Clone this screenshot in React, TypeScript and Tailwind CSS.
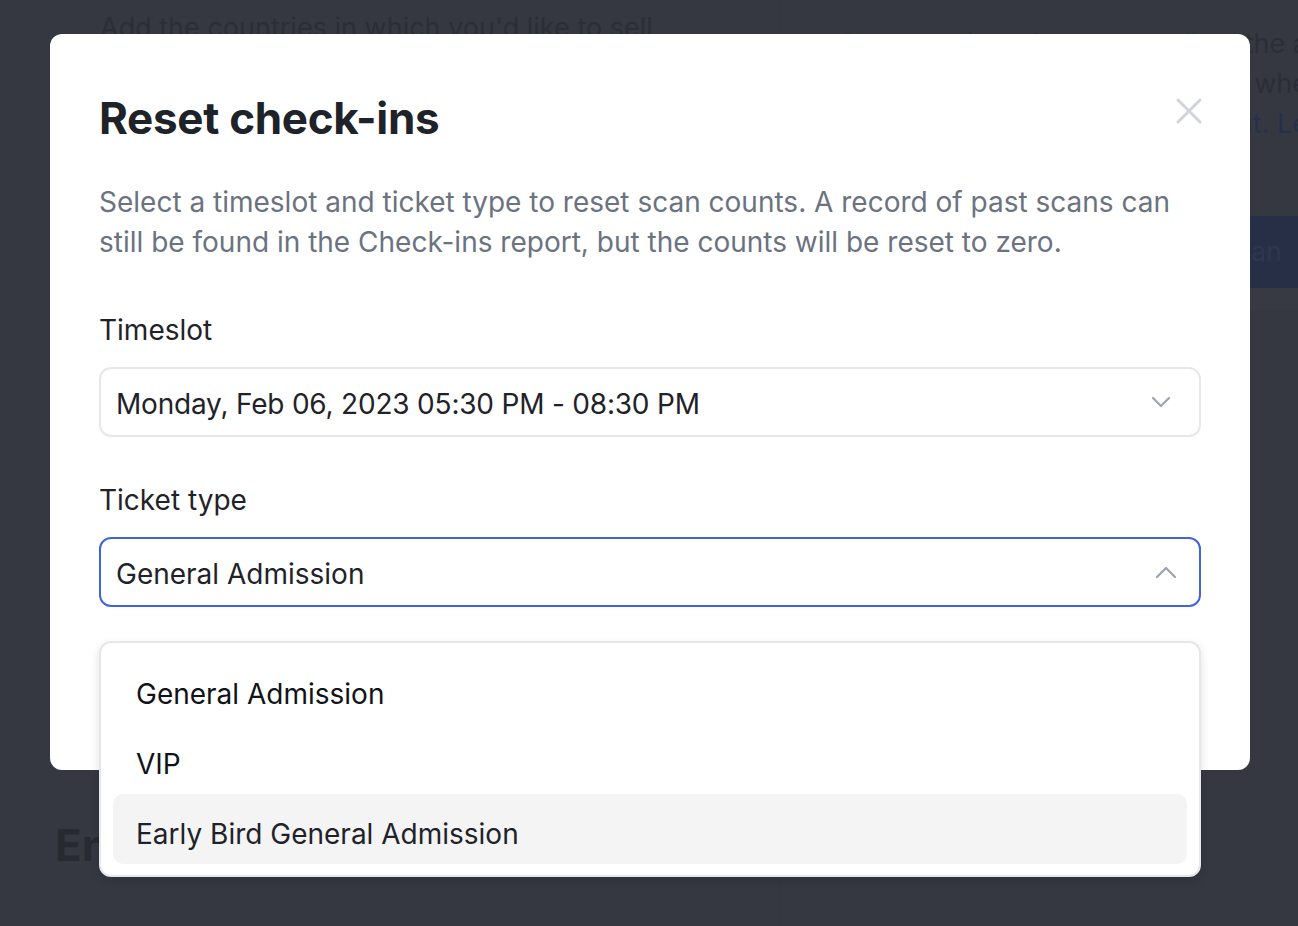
import React from "react";

const font = { fontFamily: "Inter, 'Noto Sans', sans-serif" };

function ChevronDown() {
  return (
    <svg width="20" height="12" viewBox="0 0 20 12" fill="none">
      <path d="M2 2l8 8 8-8" stroke="#9ca3af" strokeWidth="2.2" strokeLinecap="round" strokeLinejoin="round" />
    </svg>
  );
}

function ChevronUp() {
  return (
    <svg width="22" height="14" viewBox="0 0 22 14" fill="none">
      <path d="M2 12l9-9 9 9" stroke="#9ca3af" strokeWidth="2.2" strokeLinecap="round" strokeLinejoin="round" />
    </svg>
  );
}

export default function App() {
  return (
    <div
      className="relative w-[1298px] h-[926px] overflow-hidden bg-[#353841]"
      style={font}
    >
      {/* dimmed background page */}
      <div className="flex w-full h-full">
        <div className="w-[780px] shrink-0 border-r border-[#32353d] pl-[100px] pt-[8px] flex flex-col">
          <div className="text-[27px] leading-[40px] text-[#2b2e36] whitespace-nowrap">
            Add the countries in which you'd like to sell.
          </div>
          <div className="mt-auto mb-[48px] -ml-[45px] text-[44px] font-bold text-[#272a31] whitespace-nowrap">
            Enable taxes
          </div>
        </div>
        <div className="flex-1 flex flex-col pt-[24px] overflow-hidden">
          <div className="flex flex-col items-end mr-[-10px] text-[27px] leading-[40px] text-[#2b2e36] whitespace-nowrap">
            <div>Choose the countries where you collect the a</div>
            <div>Taxes will be applied to buyers from whe</div>
            <div className="text-[#27304a]">where you are registered to collect it. Le</div>
          </div>
          <div className="mt-[72px] h-[72px] bg-[#262f45] flex items-center justify-end text-[27px] text-[#2f374c] whitespace-nowrap">
            <span className="mr-[16px]">Add tax plan</span>
          </div>
          <div className="h-[22px] bg-[#373a43]" />
        </div>
      </div>

      {/* modal */}
      <div className="absolute left-[50px] top-[34px] w-[1200px] h-[736px] rounded-[12px] bg-white px-[49px] pt-[58px]">
        <div className="flex items-start justify-between">
          <h1 className="text-[44px] leading-[52px] font-bold text-[#1e2229] tracking-[-0.3px]">
            Reset check-ins
          </h1>
          <button className="mt-[5px] mr-[-2px]">
            <svg width="28" height="28" viewBox="0 0 28 28" fill="none">
              <path d="M3 3l22 22M25 3L3 25" stroke="#d1d5db" strokeWidth="3" strokeLinecap="round" />
            </svg>
          </button>
        </div>
        <p className="mt-[38px] text-[28px] leading-[40px] text-[#6b7280] whitespace-nowrap">
          Select a timeslot and ticket type to reset scan counts. A record of past scans can
          <br />
          still be found in the Check-ins report, but the counts will be reset to zero.
        </p>

        <div className="mt-[50px] text-[28px] leading-[36px] text-[#1f2329]">Timeslot</div>
        <div className="mt-[19px] h-[70px] rounded-[12px] border-2 border-[#e5e7eb] flex items-center justify-between pl-[15px] pr-[28px]">
          <span className="pt-[3px] text-[28px] tracking-[-0.2px] text-[#1f2329]">Monday, Feb 06, 2023 05:30 PM - 08:30 PM</span>
          <ChevronDown />
        </div>

        <div className="mt-[45px] text-[28px] leading-[36px] text-[#1f2329]">Ticket type</div>
        <div className="relative mt-[19px]">
          <div className="h-[70px] rounded-[12px] border-2 border-[#4065d8] flex items-center justify-between pl-[15px] pr-[22px]">
            <span className="pt-[3px] text-[28px] text-[#1f2329]">General Admission</span>
            <ChevronUp />
          </div>

          <div className="absolute left-0 right-0 top-[104px] rounded-[12px] border-2 border-[#e5e7eb] bg-white px-[12px] py-[11px] shadow-[0_4px_10px_rgba(0,0,0,0.12)]">
            <div className="h-[70px] flex items-center pl-[23px] pt-[10px] text-[28px] text-[#111318]">General Admission</div>
            <div className="h-[70px] flex items-center pl-[23px] pt-[10px] text-[28px] text-[#111318]">VIP</div>
            <div className="h-[70px] flex items-center pl-[23px] pt-[10px] rounded-[10px] bg-[#f4f4f5] text-[28px] text-[#1f2329]">
              Early Bird General Admission
            </div>
          </div>
        </div>
      </div>
    </div>
  );
}
